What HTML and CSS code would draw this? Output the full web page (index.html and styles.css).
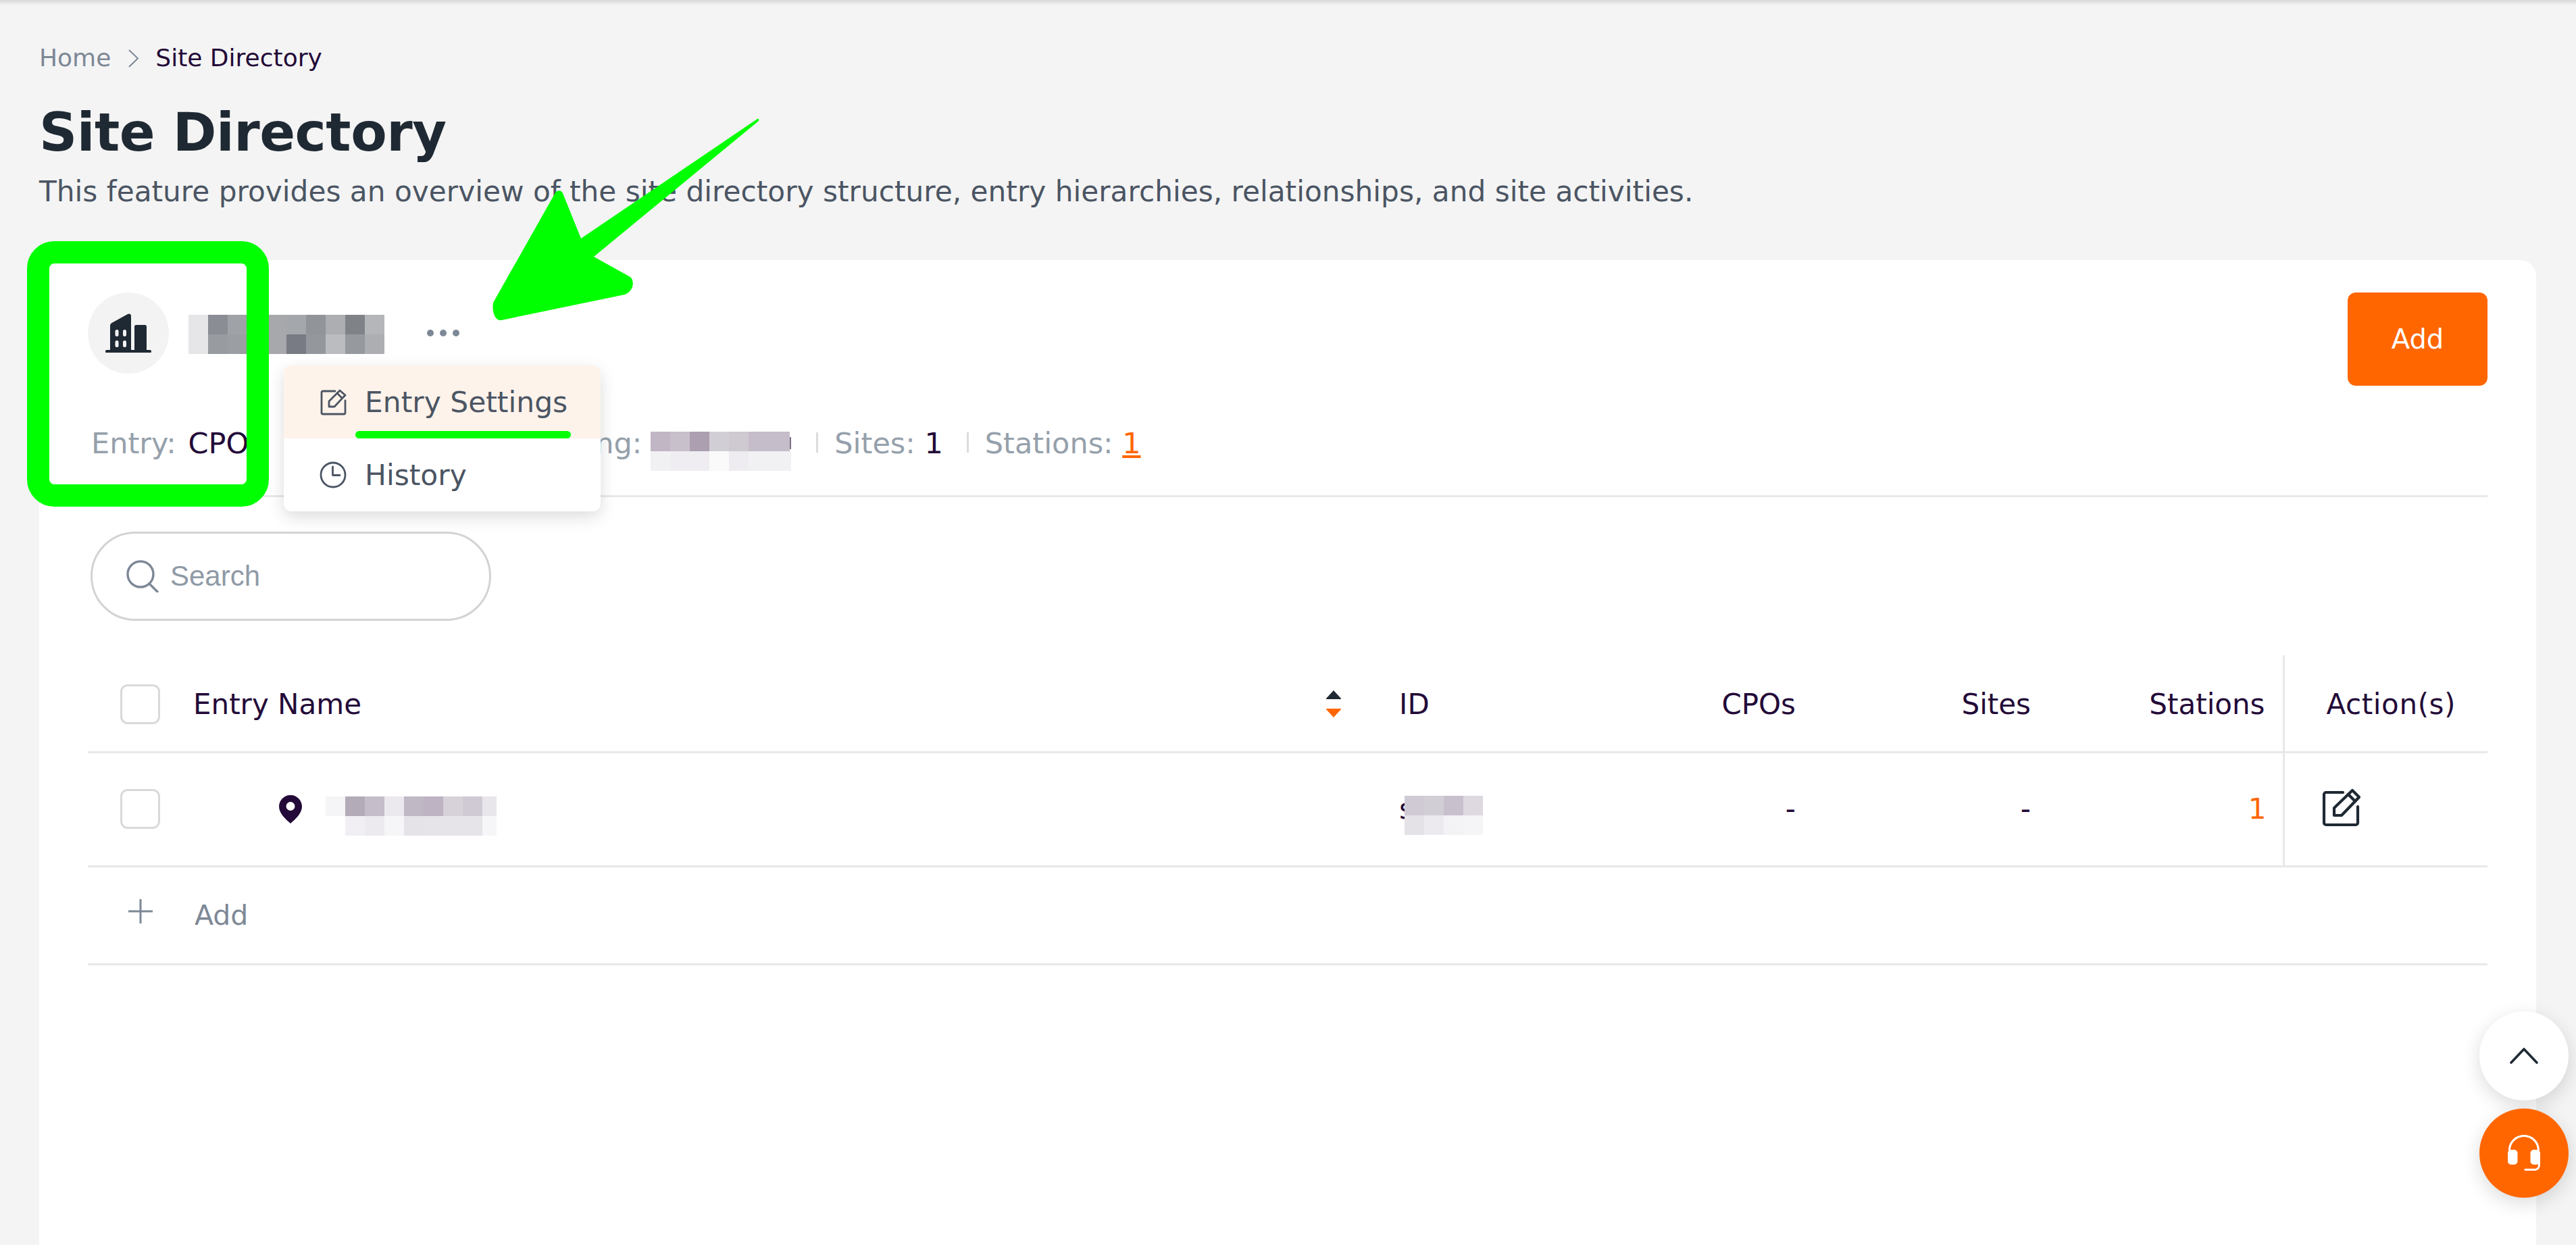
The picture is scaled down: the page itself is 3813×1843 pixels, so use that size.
FILE: index.html

```html
<!DOCTYPE html>
<html lang="en">
<head>
  <meta charset="UTF-8" />
  <meta name="viewport" content="width=device-width, initial-scale=1.0"/>
  <title>Site Directory</title>
  <link rel="stylesheet" href="styles.css">
</head>
<body>
  <div class="page">
    <div class="breadcrumb">
      <span class="crumb-home">Home</span>
      <svg class="crumb-sep" viewBox="0 0 16 27" fill="none" stroke="#7d8896" stroke-width="2"><path d="M1 1l13 12.500L1 26"/></svg>
      <span class="crumb-current">Site Directory</span>
    </div>
    <h1>Site Directory</h1>
    <p class="subtitle">This feature provides an overview of the site directory structure, entry hierarchies, relationships, and site activities.</p>

    <div class="card">
      <div class="entry-head">
        <div class="entry-left">
          <div class="avatar">
            <svg viewBox="0 0 68 58" width="68" height="58" fill="#1f2933">
              <rect x="0" y="54" width="68" height="4.500" rx="2.200"/>
              <path d="M7 55V18c0-2 1-3 2.500-4L33 1c3-1.500 5 0 5 3v51z"/>
              <rect x="43" y="17" width="18" height="38" rx="2.500"/>
              <g fill="#f3f3f3"><rect x="14.500" y="24" width="5" height="10" rx="2.500"/><rect x="26" y="24" width="5" height="10" rx="2.500"/><rect x="14.500" y="40" width="5" height="10" rx="2.500"/><rect x="26" y="40" width="5" height="10" rx="2.500"/></g>
            </svg>
          </div>
          <svg class="blur-name" width="290" height="58" shape-rendering="crispEdges">
            <rect x="0" y="0" width="29" height="29" fill="#e6e6e9"/><rect x="29" y="0" width="29" height="29" fill="#8a8d94"/><rect x="58" y="0" width="29" height="29" fill="#9fa2a6"/><rect x="87" y="0" width="29" height="29" fill="#9a9da1"/><rect x="116" y="0" width="29" height="29" fill="#a6a8ac"/><rect x="145" y="0" width="29" height="29" fill="#a4a7ab"/><rect x="174" y="0" width="29" height="29" fill="#919498"/><rect x="203" y="0" width="29" height="29" fill="#adaeb1"/><rect x="232" y="0" width="29" height="29" fill="#7f8287"/><rect x="261" y="0" width="29" height="29" fill="#b5b6b9"/>
            <rect x="0" y="29" width="29" height="29" fill="#e6e6e9"/><rect x="29" y="29" width="29" height="29" fill="#989b9f"/><rect x="58" y="29" width="29" height="29" fill="#9b9ea2"/><rect x="87" y="29" width="29" height="29" fill="#a0a3a7"/><rect x="116" y="29" width="29" height="29" fill="#a6a8ab"/><rect x="145" y="29" width="29" height="29" fill="#787b83"/><rect x="174" y="29" width="29" height="29" fill="#94979b"/><rect x="203" y="29" width="29" height="29" fill="#bbbcc0"/><rect x="232" y="29" width="29" height="29" fill="#96999d"/><rect x="261" y="29" width="29" height="29" fill="#adaeb1"/>
          </svg>
          <svg class="more-dots" width="50" height="12" fill="#7d8896"><circle cx="6" cy="6" r="5"/><circle cx="25" cy="6" r="5"/><circle cx="44" cy="6" r="5"/></svg>
        </div>
        <button class="btn-add">Add</button>
      </div>

      <div class="entry-meta">
        <span class="meta-item meta-entry">Entry: <b>CPO</b></span>
        <span class="meta-item meta-billing">ng:</span>
        <svg class="blur-meta" width="208" height="58" shape-rendering="crispEdges">
          <rect x="0" y="0" width="29" height="29" fill="#c0b6c4"/><rect x="29" y="0" width="29" height="29" fill="#c8c1cb"/><rect x="58" y="0" width="29" height="29" fill="#ac9fb0"/><rect x="87" y="0" width="29" height="29" fill="#d2ced6"/><rect x="116" y="0" width="29" height="29" fill="#cfc9d1"/><rect x="145" y="0" width="61" height="29" fill="#c6bdca"/><rect x="206" y="8" width="2" height="18" fill="#7d6f86"/>
          <rect x="0" y="29" width="29" height="29" fill="#f1f0f3"/><rect x="29" y="29" width="29" height="29" fill="#efedf1"/><rect x="58" y="29" width="29" height="29" fill="#efedf1"/><rect x="87" y="29" width="29" height="29" fill="#fafafb"/><rect x="116" y="29" width="29" height="29" fill="#eeecf0"/><rect x="145" y="29" width="63" height="29" fill="#f1f0f3"/>
        </svg>
        <i class="meta-sep"></i>
        <span class="meta-item">Sites: <b>1</b></span>
        <i class="meta-sep meta-sep-last"></i>
        <span class="meta-item">Stations: <a class="meta-link">1</a></span>
      </div>

      <div class="search-box">
        <svg viewBox="0 0 48 48" width="48" height="48" fill="none" stroke="#7d8896" stroke-width="3.400" stroke-linecap="round"><circle cx="21" cy="21" r="19"/><path d="M34 35l12 12"/></svg>
        <span>Search</span>
      </div>

      <table class="entry-table">
        <colgroup>
          <col class="col-check"><col class="col-name"><col class="col-id"><col class="col-num"><col class="col-num"><col class="col-num"><col class="col-action">
        </colgroup>
        <thead>
          <tr>
            <th><i class="checkbox"></i></th>
            <th>
              <div class="name-head">
                Entry Name
                <svg class="sort-icon" width="22" height="40" viewBox="0 0 22 40"><path d="M11 0l11 12v1H0v-1z" fill="#1f2933"/><path d="M0 27h22v1L11 40 0 28z" fill="#ff6600"/></svg>
              </div>
            </th>
            <th>ID</th>
            <th class="num">CPOs</th>
            <th class="num">Sites</th>
            <th class="num">Stations</th>
            <th class="action">Action(s)</th>
          </tr>
        </thead>
        <tbody>
          <tr>
            <td><i class="checkbox"></i></td>
            <td>
              <div class="site-name">
                <svg width="34" height="42" viewBox="0 0 34 42"><path fill-rule="evenodd" d="M17 0c9.400 0 17 7.600 17 17 0 10-10 19-17 25C10 36 0 27 0 17 0 7.600 7.600 0 17 0zm0 10a6.500 6.500 0 1 0 0 13 6.500 6.500 0 0 0 0-13z" fill="#230a38"/></svg>
                <svg class="blur-site" width="253" height="58" shape-rendering="crispEdges">
                  <rect x="0" y="0" width="29" height="29" fill="#f5f4f6"/><rect x="29" y="0" width="29" height="29" fill="#b4abb9"/><rect x="58" y="0" width="29" height="29" fill="#c5bdca"/><rect x="87" y="0" width="29" height="29" fill="#ebe8ee"/><rect x="116" y="0" width="29" height="29" fill="#c1b8c6"/><rect x="145" y="0" width="29" height="29" fill="#bdb3c2"/><rect x="174" y="0" width="29" height="29" fill="#d7d2da"/><rect x="203" y="0" width="29" height="29" fill="#d0cad4"/><rect x="232" y="0" width="21" height="29" fill="#e9e6eb"/>
                  <rect x="29" y="29" width="29" height="29" fill="#f1eff3"/><rect x="58" y="29" width="29" height="29" fill="#ece9ef"/><rect x="87" y="29" width="29" height="29" fill="#f6f5f7"/><rect x="116" y="29" width="29" height="29" fill="#e5e2e8"/><rect x="145" y="29" width="29" height="29" fill="#e6e3e9"/><rect x="174" y="29" width="29" height="29" fill="#e6e3e9"/><rect x="203" y="29" width="29" height="29" fill="#e6e3e9"/><rect x="232" y="29" width="21" height="29" fill="#f6f5f7"/>
                </svg>
              </div>
            </td>
            <td>
              <div class="site-id">
                s
                <svg class="blur-id" width="116" height="58" shape-rendering="crispEdges">
                  <rect x="0" y="0" width="29" height="29" fill="#cfcad3"/><rect x="29" y="0" width="29" height="29" fill="#d2ced6"/><rect x="58" y="0" width="29" height="29" fill="#c8c1cd"/><rect x="87" y="0" width="29" height="29" fill="#ded9e0"/>
                  <rect x="0" y="29" width="29" height="29" fill="#e4e1e7"/><rect x="29" y="29" width="29" height="29" fill="#eceaee"/><rect x="58" y="29" width="29" height="29" fill="#f3f2f5"/><rect x="87" y="29" width="29" height="29" fill="#f5f4f6"/>
                </svg>
              </div>
            </td>
            <td class="num">-</td>
            <td class="num">-</td>
            <td class="num link">1</td>
            <td class="action">
              <svg class="edit-icon" viewBox="0 0 58 58" width="58" height="58" fill="none" stroke="#1f2933" stroke-width="4.200" stroke-linejoin="round" stroke-linecap="round">
                <path d="M31 7H6a3 3 0 0 0-3 3v42a3 3 0 0 0 3 3h44a3 3 0 0 0 3-3V28"/>
                <path d="M18 41V30L45 4l10 10-26 27z"/>
                <path d="M39 10l10 10"/>
              </svg>
            </td>
          </tr>
          <tr class="add-row">
            <td>
              <svg class="plus-icon" width="36" height="36" stroke="#7d8896" stroke-width="3"><path d="M18 0v36M0 18h36"/></svg>
            </td>
            <td colspan="6"><span class="add-label">Add</span></td>
          </tr>
        </tbody>
      </table>
    </div>
  </div>

  <!-- dropdown of the "..." button -->
  <div class="menu">
    <div class="menu-item active">
      <svg viewBox="0 0 40 40" width="40" height="40" fill="none" stroke="#4b5563" stroke-width="2.800" stroke-linejoin="round" stroke-linecap="round">
        <path d="M23 4H5a2 2 0 0 0-2 2v30a2 2 0 0 0 2 2h31a2 2 0 0 0 2-2V18"/>
        <path d="M14 27v-8L30 3l8 7-16 17z"/>
        <path d="M26 7l7 7"/>
      </svg>
      Entry Settings
    </div>
    <div class="menu-item">
      <svg viewBox="0 0 40 40" width="40" height="40" fill="none" stroke="#4b5563" stroke-width="2.800" stroke-linecap="round" stroke-linejoin="round"><circle cx="20" cy="20" r="18"/><path d="M19.500 8v12.500H30"/></svg>
      History
    </div>
  </div>

  <!-- floating buttons -->
  <div class="float-btns">
    <div class="float-btn">
      <svg width="42" height="24" fill="none" stroke="#1f2933" stroke-width="3.600" stroke-linecap="round" stroke-linejoin="round"><path d="M2 22L21 2l19 20"/></svg>
    </div>
    <div class="float-btn orange">
      <svg viewBox="0 0 50 54" width="50" height="54" fill="#fff">
        <path d="M25 0C12 0 2 10 2 23h3C5 12 14 3 25 3s20 9 20 20h3C48 10 38 0 25 0z"/>
        <rect x="1" y="22" width="14.500" height="22" rx="5"/>
        <rect x="34.500" y="22" width="14.500" height="22" rx="5"/>
        <path d="M46 40v4c0 4-2 6-5 6H27a1.500 1.500 0 0 0 0 3h14c5 0 8-4 8-9v-4z"/>
      </svg>
    </div>
  </div>

  <!-- green markup drawn on top of the screenshot -->
  <svg class="markup" width="3813" height="1843">
    <rect x="56.500" y="373.500" width="325" height="360" rx="24" fill="none" stroke="#00ff00" stroke-width="33"/>
    <rect x="526" y="638" width="319" height="11" rx="5.500" fill="#00ff00"/>
    <path d="M1121 176c2-1 3 1 2 3L879 380l54 30c6 5 6 20-8 26L742 474c-10 1-14-14-12-26L821 287c2-5 9-7 12-1l27 67z" fill="#00ff00"/>
  </svg>
</body>
</html>
```

FILE: styles.css

```css
:root {
  --bg: #f4f4f4;
  --text: #230a38;
  --dark: #1f2933;
  --muted: #95a0ab;
  --slate: #7d8896;
  --line: #e8e8e8;
  --orange: #ff6600;
}

html, body {
  height: 100%;
  margin: 0;
  overflow: hidden;
}

body {
  font-family: "DejaVu Sans", sans-serif;
  background-color: var(--bg);
  color: var(--text);
  position: relative;
}

body::before {
  content: "";
  position: absolute;
  top: 0;
  left: 0;
  right: 0;
  height: 8px;
  background: linear-gradient(#d8d8d8, #f4f4f4);
}

.page {
  height: 100%;
  box-sizing: border-box;
  padding: 66px 59px 0 58px;
  display: flex;
  flex-direction: column;
}

.breadcrumb {
  display: flex;
  align-items: center;
  font-size: 36px;
  line-height: 40px;
}

.crumb-home {
  color: var(--slate);
}

.crumb-sep {
  width: 16px;
  height: 27px;
  margin: 0 24px 0 26px;
}

h1 {
  margin: 40px 0 0;
  font-size: 78px;
  line-height: 100px;
  font-weight: 700;
  letter-spacing: -0.5px;
  color: var(--dark);
}

.subtitle {
  margin: 10px 0 0;
  font-size: 42.250px;
  line-height: 56px;
  color: #4b5563;
}

.card {
  flex: 1;
  margin-top: 73px;
  padding: 48px 72px 0 72px;
  background: #fff;
  border-radius: 24px 24px 0 0;
}

.entry-head {
  display: flex;
  justify-content: space-between;
  align-items: flex-start;
}

.entry-left {
  display: flex;
  align-items: center;
  height: 120px;
}

.avatar {
  width: 120px;
  height: 120px;
  border-radius: 50%;
  background: #f3f3f3;
  display: flex;
  align-items: center;
  justify-content: center;
}

.blur-name {
  margin: 4px 0 0 29px;
}

.more-dots {
  margin-left: 62px;
}

.btn-add {
  width: 207px;
  height: 138px;
  border: 0;
  border-radius: 12px;
  background: var(--orange);
  color: #fff;
  font: 40px "DejaVu Sans", sans-serif;
}

.entry-meta {
  display: flex;
  align-items: flex-start;
  margin-top: 55px;
  padding: 0 0 36px 5px;
  font-size: 43px;
  line-height: 60px;
  color: var(--muted);
  border-bottom: 3px solid var(--line);
}

.meta-item b {
  font-weight: 400;
  color: var(--text);
}

.meta-entry b {
  margin-left: 4px;
}

.meta-billing {
  margin-left: 513px;
}

.blur-meta {
  margin: 13px 0 0 13px;
}

.meta-sep {
  width: 3px;
  height: 30px;
  margin: 14px 24px 0 37px;
  background: #dcdcdc;
}

.meta-sep-last {
  margin-left: 35px;
}

.meta-link {
  color: var(--orange);
  text-decoration: underline;
}

.search-box {
  width: 593px;
  height: 132px;
  box-sizing: border-box;
  margin: 51px 0 0 4px;
  padding-left: 50px;
  border: 3px solid #d3d3d3;
  border-radius: 66px;
  display: flex;
  align-items: center;
  gap: 17px;
  font: 42px "Liberation Sans", sans-serif;
  color: #8f9aa6;
}

.entry-table {
  width: 3552px;
  margin-top: 51px;
  table-layout: fixed;
  border-collapse: collapse;
  font-size: 42px;
}

.col-check { width: 156px; }
.col-name { width: 1785px; }
.col-id { width: 265px; }
.col-num { width: 348px; }
.col-action { width: 302px; }

th, td {
  padding: 0;
  text-align: left;
  font-weight: 400;
  border-bottom: 3px solid var(--line);
}

th {
  height: 143px;
  padding-top: 3px;
  box-sizing: border-box;
}

td {
  height: 166px;
}

th:first-child, td:first-child {
  padding-left: 48px;
}

.checkbox {
  display: block;
  width: 59px;
  height: 59px;
  box-sizing: border-box;
  border: 3px solid #d9d9d9;
  border-radius: 11px;
}

.name-head {
  display: flex;
  justify-content: space-between;
  align-items: center;
  padding-right: 86px;
}

.site-name {
  display: flex;
  align-items: center;
  padding-left: 127px;
}

.blur-site {
  margin: 20px 0 0 35px;
}

.site-id {
  position: relative;
  height: 60px;
  line-height: 60px;
}

.blur-id {
  position: absolute;
  left: 8px;
  top: 10px;
}

.num {
  text-align: right;
  padding-right: 26px;
}

td.link {
  padding-right: 24px;
  color: var(--orange);
}

.action {
  border-left: 3px solid var(--line);
  padding-left: 62px;
  letter-spacing: 0.6px;
}

td.action {
  padding-left: 55px;
}

.edit-icon {
  display: block;
  margin-bottom: 6px;
}

.add-row td {
  height: 142px;
  color: var(--slate);
}

.add-label {
  padding-left: 2px;
  font-size: 41px;
}

.plus-icon {
  display: block;
  margin: 0 0 12px 12px;
}

.menu {
  position: absolute;
  left: 420px;
  top: 541px;
  width: 469px;
  background: #fff;
  border-radius: 12px;
  overflow: hidden;
  box-shadow: 0 8px 24px rgba(0, 0, 0, 0.14);
}

.menu-item {
  height: 108px;
  display: flex;
  align-items: center;
  gap: 27px;
  padding-left: 53px;
  font-size: 42.400px;
  color: #4b5563;
}

.menu-item.active {
  background: #fef3eb;
}

.float-btns {
  position: absolute;
  left: 3670px;
  top: 1497px;
  display: flex;
  flex-direction: column;
  gap: 12px;
}

.float-btn {
  width: 132px;
  height: 132px;
  border-radius: 50%;
  background: #fff;
  display: flex;
  align-items: center;
  justify-content: center;
  box-shadow: 0 8px 28px rgba(0, 0, 0, 0.14);
}

.float-btn.orange {
  background: var(--orange);
}

.markup {
  position: absolute;
  left: 0;
  top: 0;
}
```
